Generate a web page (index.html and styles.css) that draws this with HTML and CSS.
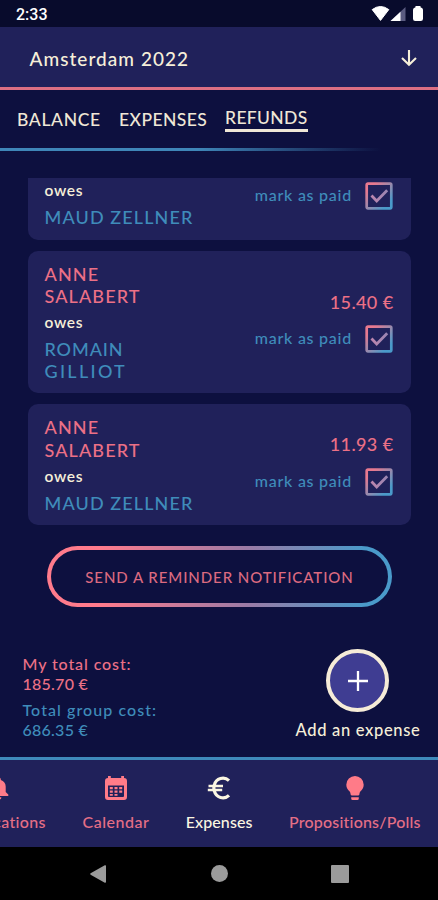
FILE: index.html
```html
<!DOCTYPE html>
<html lang="en">
<head>
<meta charset="utf-8">
<title>Amsterdam 2022 – Refunds</title>
<link rel="stylesheet" href="styles.css">
</head>
<body>
<svg class="defs" width="0" height="0" aria-hidden="true">
  <defs>
    <linearGradient id="duo" x1="0" y1="0" x2="1" y2="1">
      <stop offset="0.15" stop-color="#e8798f"/><stop offset="0.85" stop-color="#4a9aca"/>
    </linearGradient>
    <linearGradient id="tick" x1="0" y1="0" x2="1" y2="0">
      <stop offset="0" stop-color="#bd86ae"/><stop offset="1" stop-color="#9a85b2"/>
    </linearGradient>
    <symbol id="checkbox" viewBox="0 0 28 28">
      <rect x="1.7" y="1.7" width="24.6" height="24.6" rx="1.2" fill="none" stroke="url(#duo)" stroke-width="2.7"/>
      <path d="M6.500 13.500l5.200 5.500 10.500-10.800" fill="none" stroke="url(#tick)" stroke-width="2.8"/>
    </symbol>
  </defs>
</svg>
<div class="phone">
  <div class="status">
    <span class="clock">2:33</span>
    <svg width="54" height="18" viewBox="0 0 54 18">
      <path d="M2.2 4.6Q10.5-1.6 18.8 4.6L10.5 15.4z" fill="#fff" stroke="#fff" stroke-linejoin="round"/>
      <path d="M35.5 2v14h-15z" fill="#5a5b80"/>
      <path d="M30.5 6.7V16h-10z" fill="#fff"/>
      <path d="M45.5 2.2V1h5v1.2q2.5.5 2.5 2.6v9q0 2.2-2.2 2.2h-5.600q-2.200 0-2.200-2.200v-9q0-2.100 2.500-2.600z" fill="#fff"/>
    </svg>
  </div>
  <header class="trip">
    <h1>Amsterdam 2022</h1>
    <svg width="18" height="18" viewBox="0 0 18 18" fill="none" stroke="#f6efd9" stroke-width="2.100"><path d="M9 1v14.500M2 9l7 6.700L16 9"/></svg>
  </header>
  <nav class="tabs">
    <span class="tab balance">BALANCE</span>
    <span class="tab expenses">EXPENSES</span>
    <span class="tab active">REFUNDS</span>
  </nav>
  <div class="fade-line"></div>
  <main class="list">
    <article class="card cut">
      <div class="people">
        <div class="owes">owes</div>
        <div class="name to">MAUD ZELLNER</div>
      </div>
      <div class="side">
        <div class="paid"><span>mark as paid</span><svg width="28" height="28"><use href="#checkbox"/></svg></div>
      </div>
    </article>
    <article class="card">
      <div class="people">
        <div class="name from">ANNE<br>SALABERT</div>
        <div class="owes">owes</div>
        <div class="name to"><span class="romain">ROMAIN</span><br><span class="gilliot">GILLIOT</span></div>
      </div>
      <div class="side">
        <div class="amount">15.40 €</div>
        <div class="paid"><span>mark as paid</span><svg width="28" height="28"><use href="#checkbox"/></svg></div>
      </div>
    </article>
    <article class="card">
      <div class="people">
        <div class="name from">ANNE<br>SALABERT</div>
        <div class="owes">owes</div>
        <div class="name to">MAUD ZELLNER</div>
      </div>
      <div class="side">
        <div class="amount">11.93 €</div>
        <div class="paid"><span>mark as paid</span><svg width="28" height="28"><use href="#checkbox"/></svg></div>
      </div>
    </article>
  </main>
  <button class="reminder"><span>SEND A REMINDER NOTIFICATION</span></button>
  <section class="summary">
    <div class="totals">
      <div class="mine"><span class="mylabel">My total cost:</span><br>185.70 €</div>
      <div class="group"><span class="grouplabel">Total group cost:</span><br>686.35 €</div>
    </div>
    <div class="add">
      <div class="fab"><svg width="20" height="20" viewBox="0 0 20 20" stroke="#fff" stroke-width="2.300"><path d="M10 0v20M0 10h20"/></svg></div>
      <span>Add an expense</span>
    </div>
  </section>
  <nav class="bottom">
    <div class="item notif">
      <svg width="24" height="24" viewBox="0 0 24 24" fill="#ff7b88"><path d="M12 1.500c1 0 1.800.8 1.800 1.800v.7c3 .8 4.900 3.400 4.900 6.600v5.400l2.600 2.600v1.400H2.700v-1.400L5.300 16v-5.400C5.300 7.400 7.200 4.800 10.200 4v-.7c0-1 .8-1.800 1.800-1.800zM9.600 21.200h4.800a2.400 2.400 0 0 1-4.800 0z"/></svg>
      <span>Notifications</span>
    </div>
    <div class="item">
      <svg width="24" height="24" viewBox="0 0 24 24"><path fill="#ff7b88" fill-rule="evenodd" d="M4 0h2.800v2h10.400V0H20v2q3 .2 3 3v16q0 3-3 3H4q-3 0-3-3V5q0-2.800 3-3zM4 9.500h16V20q0 1-1 1H5q-1 0-1-1z"/><path fill="#ff7b88" d="M5.800 11h3v2.200h-3zM10.500 11h3v2.200h-3zM15.200 11h3v2.200h-3zM5.800 14.500h3v2.200h-3zM10.500 14.500h3v2.200h-3zM15.200 14.500h3v2.200h-3zM5.800 18h3v1.800h-3zM10.500 18h3v1.800h-3z"/></svg>
      <span class="callabel">Calendar</span>
    </div>
    <div class="item current">
      <svg width="24" height="24" viewBox="0 0 24 24" fill="none" stroke="#fbf6e2" stroke-width="3.200"><path d="M22 4.600A8.800 8.800 0 0 0 7.400 8.800Q6.300 12 7.400 15.200A8.800 8.800 0 0 0 22 19.400"/><path stroke-width="2.500" d="M1.500 9.900h14.500M.8 14.100h14.400"/></svg>
      <span>Expenses</span>
    </div>
    <div class="item">
      <svg width="24" height="24" viewBox="0 0 24 24" fill="#ff7b88"><path d="M12 0a8.700 8.700 0 0 1 8.700 8.700c0 3.200-1.700 5.200-3.400 6.900-.6.700-.8 1.600-.9 2.700-.1.800-.4 1.100-1.100 1.100H8.700c-.7 0-1-.3-1.100-1.100-.1-1.100-.3-2-.9-2.700-1.700-1.700-3.400-3.700-3.400-6.900A8.700 8.700 0 0 1 12 0zM8.200 21.200h7.600v1.300q0 1.500-1.500 1.500H9.700q-1.500 0-1.500-1.500z"/></svg>
      <span class="proplabel">Propositions/Polls</span>
    </div>
  </nav>
  <div class="system">
    <svg width="18" height="20" viewBox="0 0 18 20"><path d="M16.200 2v16L2 10z" fill="#9b9b9b" stroke="#9b9b9b" stroke-width="1.600" stroke-linejoin="round"/></svg>
    <span class="home"></span>
    <span class="recent"></span>
  </div>
</div>
</body>
</html>
```
FILE: styles.css
```css
* { box-sizing: border-box; }
body {
  margin: 0;
  background: #0d103f;
  font-family: Lato, "Open Sans", sans-serif;
  font-weight: 500;
}
.defs { display: block; height: 0; }
svg { display: block; flex: none; }
.phone {
  width: 438px;
  height: 900px;
  display: flex;
  flex-direction: column;
  overflow: hidden;
}
.status {
  height: 27px;
  flex: none;
  display: flex;
  justify-content: space-between;
  padding: 5px 14px 0 16px;
  background: #080b2c;
}
.clock {
  font: 500 16px/19px Roboto, sans-serif;
  color: #fff;
}
.trip {
  height: 63px;
  flex: none;
  display: flex;
  align-items: center;
  justify-content: space-between;
  padding: 2px 20px 0 29.500px;
  background: #20215a;
  border-bottom: 3px solid #dc6f83;
  color: #f6efd9;
}
.trip h1 {
  margin: 0;
  padding-top: 1px;
  font-size: 19px;
  line-height: 24px;
  font-weight: 500;
  letter-spacing: 1.040px;
}
.tabs {
  height: 58px;
  flex: none;
  display: flex;
  align-items: flex-start;
  padding: 18px 0 0 17px;
  gap: 18px;
  color: #efe7d6;
  font-size: 17.500px;
  line-height: 24px;
}
.balance { letter-spacing: 0.650px; width: 84px; }
.expenses { letter-spacing: 0.420px; width: 88px; }
.active {
  margin-top: -2px;
  width: 83px;
  height: 26px;
  line-height: 23px;
  border-bottom: 3px solid #efe7d6;
  letter-spacing: 0.350px;
}
.fade-line {
  height: 3px;
  flex: none;
  background: linear-gradient(90deg, #3f86b8 0, #3f86b8 45%, transparent 87%);
}
.list {
  height: 347px;
  flex: none;
  margin: 27px 27px 0 28px;
  display: flex;
  flex-direction: column;
  gap: 11px;
}
.card {
  display: flex;
  justify-content: space-between;
  padding: 12px 18.500px 10.600px 16.500px;
  background: #20215a;
  border-radius: 10px;
}
.cut {
  height: 61.500px;
  padding-top: 2.500px;
  border-radius: 0 0 10px 10px;
}
.name {
  font-size: 18px;
  line-height: 22.300px;
  letter-spacing: 1.120px;
}
.from { color: #ec7086; }
.to { color: #3f8cba; }
.romain { letter-spacing: 0.900px; }
.gilliot { letter-spacing: 2.300px; }
.owes {
  margin: 5px 0 6px;
  font-size: 15.500px;
  line-height: 20px;
  font-weight: 600;
  letter-spacing: 0.700px;
  color: #f6efd9;
}
.cut .owes { margin: -1px 0 6px; }
.side {
  display: flex;
  flex-direction: column;
  justify-content: center;
  align-items: flex-end;
  gap: 12.500px;
}
.cut .side { justify-content: flex-start; padding-top: 1.500px; }
.amount {
  margin-top: -1.500px;
  font-size: 18px;
  line-height: 22px;
  letter-spacing: 0.400px;
  margin-right: -1px;
  color: #ec7086;
}
.paid {
  display: flex;
  align-items: center;
  gap: 12.500px;
  font-size: 16px;
  line-height: 22px;
  letter-spacing: 0.750px;
  color: #3f8cba;
}
.paid span { margin-top: -2px; }
.reminder {
  width: 345px;
  height: 61px;
  flex: none;
  margin: 21px 0 0 47px;
  padding: 0;
  border: 4px solid transparent;
  border-radius: 31px;
  background:
    linear-gradient(#0d103f, #0d103f) padding-box,
    linear-gradient(90deg, #ff7b8c 15%, #9b7ba6 58%, #4a9aca 92%) border-box;
  color: #dc6a80;
  font: 500 15px/20px Lato, sans-serif;
  letter-spacing: 0.930px;
}
.summary {
  height: 150px;
  flex: none;
  display: flex;
  justify-content: space-between;
  padding: 42px 17.500px 0 22.500px;
}
.totals {
  padding-top: 5px;
  font-size: 16px;
  line-height: 20px;
  letter-spacing: 0.250px;
}
.mine { color: #ec7086; }
.group { color: #3f8cba; margin-top: 6px; }
.mylabel { letter-spacing: 0.900px; }
.grouplabel { letter-spacing: 1.070px; }
.add {
  display: flex;
  flex-direction: column;
  align-items: center;
  color: #f6efd9;
  font-size: 16.500px;
  line-height: 20px;
  letter-spacing: 0.680px;
}
.fab {
  width: 63px;
  height: 63px;
  margin-bottom: 8px;
  display: flex;
  align-items: center;
  justify-content: center;
  border: 4px solid #f6ecd8;
  border-radius: 50%;
  background: #3f3d92;
}
.bottom {
  height: 90px;
  flex: none;
  display: flex;
  gap: 36.500px;
  padding-top: 16px;
  background: #20215a;
  border-top: 3px solid #3f8abb;
  color: #e56f86;
  font-size: 16px;
  line-height: 20px;
}
.item {
  flex: none;
  display: flex;
  flex-direction: column;
  align-items: center;
  gap: 12px;
}
.notif { margin-left: -49px; width: 95px; letter-spacing: 0.300px; }
.callabel { letter-spacing: 0.500px; }
.current { color: #fbf6e2; letter-spacing: 0.080px; }
.proplabel { letter-spacing: 0.200px; }
.system {
  flex: 1;
  display: flex;
  align-items: center;
  padding-left: 89px;
  background: #000;
}
.home {
  width: 17px;
  height: 17px;
  margin-left: 104px;
  border-radius: 50%;
  background: #9b9b9b;
}
.recent {
  width: 18px;
  height: 18px;
  margin-left: 103px;
  border-radius: 1px;
  background: #9b9b9b;
}
```
